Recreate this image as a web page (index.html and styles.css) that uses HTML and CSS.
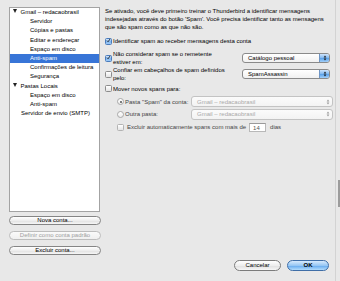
FILE: index.html
```html
<!DOCTYPE html>
<html lang="pt-BR">
  <head>
    <meta charset="UTF-8" />
    <title>Configurações de contas</title>
    <link rel="stylesheet" href="styles.css">
  </head>
  <body>
    <div class="window">
      <aside class="sidebar">
        <ul class="tree">
          <li class="row lvl1"><span class="twisty"></span>Gmail – redacaobrasil</li>
          <li class="row lvl2">Servidor</li>
          <li class="row lvl2">Cópias e pastas</li>
          <li class="row lvl2">Editar e endereçar</li>
          <li class="row lvl2">Espaço em disco</li>
          <li class="row lvl2 selected">Anti-spam</li>
          <li class="row lvl2">Confirmações de leitura</li>
          <li class="row lvl2">Segurança</li>
          <li class="row lvl1"><span class="twisty"></span>Pastas Locais</li>
          <li class="row lvl2">Espaço em disco</li>
          <li class="row lvl2">Anti-spam</li>
          <li class="row leaf">Servidor de envio (SMTP)</li>
        </ul>
        <button type="button" class="pill first">Nova conta...</button>
        <button type="button" class="pill" disabled>Definir como conta padrão</button>
        <button type="button" class="pill">Excluir conta...</button>
      </aside>

      <main class="pane">
        <p class="intro">Se ativado, você deve primeiro treinar o Thunderbird a identificar mensagens indesejadas através do botão 'Spam'. Você precisa identificar tanto as mensagens que são spam como as que não são.</p>

        <div class="line identify">
          <span class="check on"><svg viewBox="0 0 8 8"><path d="M1.6 4.2 L3.3 6 L6.6 1.4" /></svg></span>
          <span>Identificar spam ao receber mensagens desta conta</span>
        </div>

        <div class="line pair whitelist">
          <div class="line">
            <span class="check on"><svg viewBox="0 0 8 8"><path d="M1.6 4.2 L3.3 6 L6.6 1.4" /></svg></span>
            <span>Não considerar spam se o remetente<br>estiver em:</span>
          </div>
          <div class="select">
            <span>Catálogo pessoal</span>
            <span class="stepper"><svg viewBox="0 0 5 8"><path d="M2.5 0.8 L4.3 3.2 L0.7 3.2 Z M2.5 7.2 L4.3 4.8 L0.7 4.8 Z" /></svg></span>
          </div>
        </div>

        <div class="line pair">
          <div class="line">
            <span class="check"></span>
            <span>Confiar em cabeçalhos de spam definidos<br>pelo:</span>
          </div>
          <div class="select">
            <span>SpamAssassin</span>
            <span class="stepper"><svg viewBox="0 0 5 8"><path d="M2.5 0.8 L4.3 3.2 L0.7 3.2 Z M2.5 7.2 L4.3 4.8 L0.7 4.8 Z" /></svg></span>
          </div>
        </div>

        <div class="line move">
          <span class="check"></span>
          <span>Mover novos spans para:</span>
        </div>

        <div class="line target first-target">
          <div class="line target-label">
            <span class="radio on"></span>
            <span>Pasta "Spam" da conta:</span>
          </div>
          <div class="select wide off">
            <span>Gmail – redacaobrasil</span>
            <span class="stepper"><svg viewBox="0 0 5 8"><path d="M2.5 0.8 L4.3 3.2 L0.7 3.2 Z M2.5 7.2 L4.3 4.8 L0.7 4.8 Z" /></svg></span>
          </div>
        </div>

        <div class="line target">
          <div class="line target-label">
            <span class="radio"></span>
            <span>Outra pasta:</span>
          </div>
          <div class="select wide off">
            <span>Gmail – redacaobrasil</span>
            <span class="stepper"><svg viewBox="0 0 5 8"><path d="M2.5 0.8 L4.3 3.2 L0.7 3.2 Z M2.5 7.2 L4.3 4.8 L0.7 4.8 Z" /></svg></span>
          </div>
        </div>

        <div class="line purge">
          <span class="check"></span>
          <span>Excluir automaticamente spans com mais de</span>
          <span class="days">14</span>
          <span class="unit">dias</span>
        </div>

        <div class="footer">
          <button type="button" class="aqua cancel">Cancelar</button>
          <button type="button" class="aqua ok">OK</button>
        </div>
      </main>

      <div class="edge"><div class="grip"></div></div>
    </div>
  </body>
</html>
```

FILE: styles.css
```css
/* preferences sheet, anti-spam page */
body {
  margin: 0;
  background-color: #e8e8e8;
  font-family: "Liberation Sans", Arial, sans-serif;
  font-size: 6px;
  line-height: 8px;
  color: #000;
}
.window {
  display: flex;
  height: 281px;
  overflow: hidden;
}

/* left column */
.sidebar {
  width: 92px;
  margin-left: 9px;
  padding-top: 7px;
  display: flex;
  flex-direction: column;
}
.tree {
  list-style: none;
  margin: 0;
  padding: 0;
  width: 91px;
  height: 205px;
  box-sizing: border-box;
  background-color: #fff;
  border: 1px solid #a3a3a3;
}
.row {
  height: 9.2px;
  line-height: 9.2px;
  white-space: nowrap;
  color: #000;
}
.lvl1 {
  padding-left: 2px;
}
.lvl2 {
  padding-left: 20px;
}
.leaf {
  padding-left: 11px;
}
.twisty {
  display: inline-block;
  width: 0;
  height: 0;
  margin-right: 4px;
  margin-left: 0.5px;
  vertical-align: 1px;
  border-left: 2.3px solid transparent;
  border-right: 2.3px solid transparent;
  border-top: 4px solid #222;
}
.selected {
  background-color: #3875d7;
  color: #fff;
}
.pill {
  display: block;
  width: 92px;
  height: 9px;
  margin-top: 6px;
  padding: 0;
  font-family: inherit;
  font-size: 6px;
  line-height: 7px;
  color: #000;
  border: 1px solid #858585;
  border-radius: 5px;
  background: linear-gradient(#ffffff, #eeeeee 50%, #e0e0e0 51%, #f6f6f6);
}
.pill.first {
  margin-top: 4px;
}
.pill:disabled {
  color: #a0a0a0;
  border-color: #bdbdbd;
  background: linear-gradient(#fafafa, #f0f0f0);
}

/* right column */
.pane {
  width: 228px;
  margin-left: 4px;
  padding-top: 6.5px;
  padding-bottom: 10px;
  box-sizing: border-box;
  display: flex;
  flex-direction: column;
}
.intro {
  margin: 0;
}
.line {
  display: flex;
  align-items: center;
}
.identify {
  margin-top: 6.5px;
  height: 8px;
}
.pair {
  justify-content: space-between;
  height: 16px;
}
.whitelist {
  margin-top: 5px;
}
.move {
  margin-top: 2.5px;
  height: 8px;
}
.target {
  height: 11px;
  margin-top: 1.5px;
}
.first-target {
  margin-top: 3.5px;
}
.target-label {
  width: 86px;
  padding-left: 12px;
  box-sizing: border-box;
  color: #444;
}
.purge {
  margin-top: 3px;
  height: 9px;
  padding-left: 12px;
  color: #444;
}

.check {
  flex: none;
  width: 7px;
  height: 7px;
  margin-right: 1px;
  box-sizing: border-box;
  border: 1px solid #8c8c8c;
  border-radius: 1.5px;
  background: linear-gradient(#ffffff, #e4e4e4);
  display: flex;
  align-items: center;
  justify-content: center;
}
.check.on {
  border-color: #4a7cbd;
  background: linear-gradient(#d4e7fc, #7db4ee 55%, #9fcaf6);
}
.check svg {
  width: 7px;
  height: 7px;
  margin-top: -1px;
  fill: none;
  stroke: #151515;
  stroke-width: 1.3;
}
.purge .check {
  margin-right: 3px;
  border-color: #b3b3b3;
}
.radio {
  flex: none;
  width: 7px;
  height: 7px;
  margin-right: 1px;
  box-sizing: border-box;
  border: 1px solid #a9a9a9;
  border-radius: 50%;
  background: linear-gradient(#ffffff, #ececec);
  display: flex;
  align-items: center;
  justify-content: center;
}
.radio.on::after {
  content: "";
  width: 2px;
  height: 2px;
  border-radius: 50%;
  background-color: #555;
}

.select {
  width: 88px;
  height: 10px;
  margin-right: 3px;
  box-sizing: border-box;
  display: flex;
  align-items: center;
  justify-content: space-between;
  padding-left: 5px;
  border: 1px solid #8a8a8a;
  border-radius: 3px;
  background: linear-gradient(#ffffff, #f1f1f1);
  overflow: hidden;
  color: #000;
}
.stepper {
  width: 9px;
  height: 100%;
  display: flex;
  align-items: center;
  justify-content: center;
  background: linear-gradient(#cfe4fb, #7fb7f0 50%, #559ee9 51%, #a3cff8);
  border-left: 1px solid #6f95c4;
}
.stepper svg {
  width: 4px;
  height: 6px;
  fill: #1b1b1b;
}
.select.wide {
  width: 142px;
  height: 11px;
  margin-right: 0;
}
.select.off {
  color: #a9a9a9;
  border-color: #c3c3c3;
  background: linear-gradient(#fbfbfb, #f3f3f3);
}
.select.off .stepper {
  background: none;
  border-left: none;
}
.select.off .stepper svg {
  fill: #9a9a9a;
}

.days {
  width: 17px;
  height: 9px;
  margin-left: 3px;
  padding-left: 3px;
  box-sizing: border-box;
  line-height: 8px;
  background-color: #fff;
  border: 1px solid #b8b8b8;
  border-top-color: #9a9a9a;
  color: #555;
}
.unit {
  margin-left: 4px;
}

.footer {
  margin-top: auto;
  display: flex;
  justify-content: flex-end;
  gap: 6px;
  padding-right: 4px;
}
.aqua {
  height: 11px;
  padding: 0;
  font-family: inherit;
  font-size: 6px;
  line-height: 9px;
  color: #000;
  border-radius: 6px;
}
.cancel {
  width: 47px;
  border: 1px solid #7c7c7c;
  background: linear-gradient(#ffffff, #eeeeee 50%, #dedede 51%, #f7f7f7);
}
.ok {
  width: 42px;
  font-weight: bold;
  border: 1px solid #3f6ea7;
  background: linear-gradient(#d7eafd, #97c7f4 50%, #62a8ee 51%, #b3dcfc);
}

/* window edge */
.edge {
  flex: 1;
  margin-left: 2px;
  border-left: 1px solid #d3d3d3;
}
.grip {
  width: 2px;
  height: 27px;
  margin-top: 180px;
  margin-left: 2px;
  background-color: #9c9c9c;
}
```
